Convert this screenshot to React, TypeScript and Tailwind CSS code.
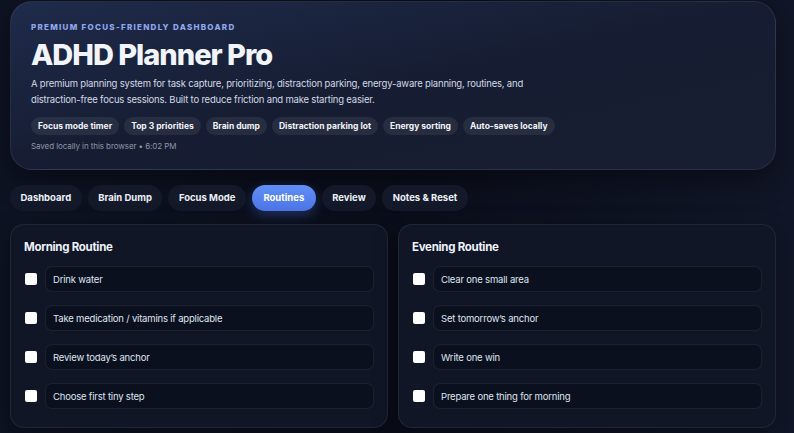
import { useState } from "react";

const features = [
  "Focus mode timer",
  "Top 3 priorities",
  "Brain dump",
  "Distraction parking lot",
  "Energy sorting",
  "Auto-saves locally",
];

const tabs = ["Dashboard", "Brain Dump", "Focus Mode", "Routines", "Review", "Notes & Reset"];

const morning = [
  "Drink water",
  "Take medication / vitamins if applicable",
  "Review today’s anchor",
  "Choose first tiny step",
];

const evening = [
  "Clear one small area",
  "Set tomorrow’s anchor",
  "Write one win",
  "Prepare one thing for morning",
];

function RoutineCard({ title, items }: { title: string; items: string[] }) {
  const [done, setDone] = useState<boolean[]>(items.map(() => false));

  return (
    <section className="rounded-[14px] border border-white/[0.07] bg-[#101626] px-[13px] pb-[18px] pt-[13px] shadow-[0_8px_24px_rgba(0,0,0,0.35)]">
      <h2 className="text-[11.5px] font-bold leading-[18px] tracking-[-0.025em] text-[#eef2fb]">{title}</h2>
      <div className="mt-[10px] flex flex-col gap-[13px]">
        {items.map((item, index) => (
          <div key={item} className="flex items-center gap-[8px]">
            <input
              type="checkbox"
              checked={done[index]}
              onChange={() => setDone((current) => current.map((value, i) => (i === index ? !value : value)))}
              className="ml-[1px] h-[12px] w-[12px] shrink-0 appearance-none rounded-[2px] bg-white"
            />
            <input
              defaultValue={item}
              className="h-[26px] w-full rounded-[7px] border border-white/[0.07] bg-[#0b101e] px-[7px] text-[9.5px] tracking-[-0.02em] text-[#dfe5f0] outline-none"
            />
          </div>
        ))}
      </div>
    </section>
  );
}

export default function App() {
  const [active, setActive] = useState("Routines");

  return (
    <div
      className="min-h-[433px] bg-gradient-to-r from-[#0e1323] via-[#0a0e1a] to-[#111628] pb-[6px] pl-[10px] pr-[18px] pt-[1px] text-white"
      style={{ fontFamily: "Inter, 'Noto Sans', sans-serif" }}
    >
      <header className="h-[169px] rounded-[22px] border border-white/[0.07] bg-gradient-to-br from-[#1f2b4b] via-[#161d32] to-[#171e31] px-[20px] pt-[20px] shadow-[0_10px_30px_rgba(0,0,0,0.4)]">
        <p className="text-[8px] font-extrabold uppercase leading-[10px] tracking-[0.16em] text-[#92a6ee]">
          Premium focus-friendly dashboard
        </p>
        <h1 className="mt-[5px] text-[29px] font-extrabold leading-[36px] tracking-[-0.035em] text-[#f1f4fb]">
          ADHD Planner Pro
        </h1>
        <p className="mt-[3px] max-w-[540px] text-[9.5px] leading-[16px] tracking-[-0.02em] text-[#d3d9e6]">
          A premium planning system for task capture, prioritizing, distraction parking, energy-aware planning, routines, and
          distraction-free focus sessions. Built to reduce friction and make starting easier.
        </p>
        <div className="mt-[9px] flex flex-wrap gap-[5px]">
          {features.map((feature) => (
            <span
              key={feature}
              className="rounded-full bg-white/[0.07] px-[7px] py-[3px] text-[8.5px] font-bold leading-[12px] text-[#f2f4f9]"
            >
              {feature}
            </span>
          ))}
        </div>
        <p className="mt-[5px] text-[8px] leading-[12px] tracking-[-0.01em] text-[#8d96a8]">Saved locally in this browser • 6:02 PM</p>
      </header>

      <nav className="mt-[15px] flex gap-[6px]">
        {tabs.map((tab) => (
          <button
            key={tab}
            onClick={() => setActive(tab)}
            className={
              tab === active
                ? "h-[26px] rounded-full bg-gradient-to-b from-[#618ff6] to-[#4c74e6] px-[11.5px] text-[9.5px] font-bold text-white shadow-[0_4px_12px_rgba(76,116,230,0.35)]"
                : "h-[26px] rounded-full bg-[#131929] px-[10.5px] text-[9.5px] font-bold text-[#eef1f8]"
            }
          >
            {tab}
          </button>
        ))}
      </nav>

      <div className="mt-[13px] grid grid-cols-2 gap-[10px]">
        <RoutineCard title="Morning Routine" items={morning} />
        <RoutineCard title="Evening Routine" items={evening} />
      </div>
    </div>
  );
}
